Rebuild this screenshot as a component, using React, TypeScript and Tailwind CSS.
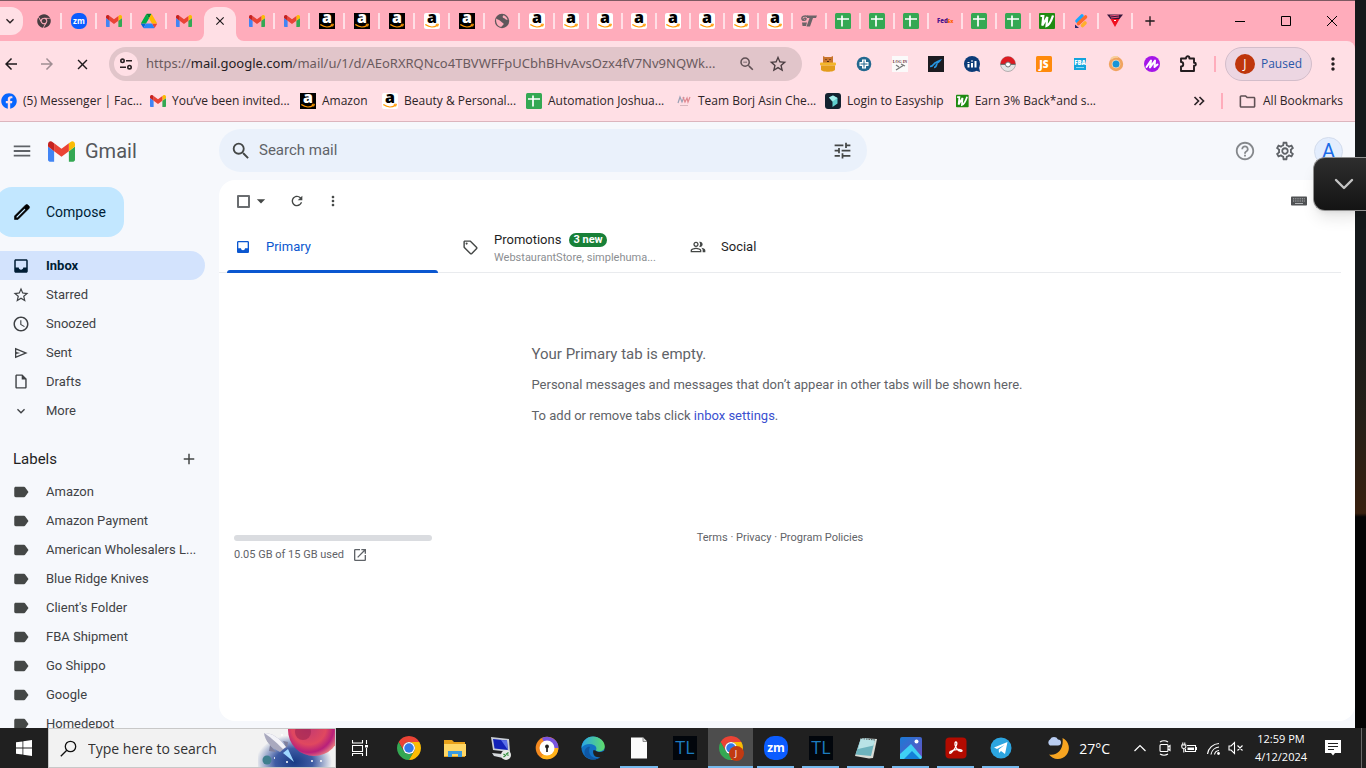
import React from "react";
import {
  MdAdd, MdArrowBack, MdArrowDropDown, MdArrowForward, MdClose, MdExpandMore, MdHelpOutline,
  MdLabel, MdMenu, MdMoreVert, MdOpenInNew, MdOutlineFolder,
  MdOutlineInsertDriveFile, MdOutlinePeopleAlt, MdOutlineSell, MdOutlineSettings,
  MdRefresh, MdSchedule, MdSearch, MdStarBorder, MdTune, MdZoomOut,
} from "react-icons/md";
import { FaChrome, FaFacebook } from "react-icons/fa";

/* ---------- logos ---------- */

const GmailLogo = ({ className = "w-4 h-3" }: { className?: string }) => (
  <svg viewBox="52 42 88 66" className={className} aria-hidden="true">
    <path fill="#4285f4" d="M58 108h14V74L52 59v43c0 3.32 2.69 6 6 6" />
    <path fill="#34a853" d="M120 108h14c3.32 0 6-2.69 6-6V59l-20 15" />
    <path fill="#fbbc04" d="M120 48v26l20-15v-8c0-7.42-8.47-11.65-14.4-7.2" />
    <path fill="#ea4335" d="M72 74V48l24 18 24-18v26L96 92" />
    <path fill="#c5221f" d="M52 51v8l20 15V48l-5.6-4.2c-5.94-4.45-14.4-.22-14.4 7.2" />
  </svg>
);

const DriveLogo = () => (
  <svg viewBox="0 0 87.3 78" className="w-4 h-4" aria-hidden="true">
    <path fill="#0066da" d="m6.6 66.85 3.85 6.65c.8 1.4 1.95 2.5 3.3 3.3l13.75-23.8h-27.5c0 1.55.4 3.1 1.2 4.5z" />
    <path fill="#00ac47" d="m43.65 25-13.75-23.8c-1.35.8-2.5 1.9-3.3 3.3l-25.4 44a9.06 9.06 0 0 0 -1.2 4.5h27.5z" />
    <path fill="#ea4335" d="m73.55 76.8c1.35-.8 2.5-1.9 3.3-3.3l1.6-2.75 7.65-13.25c.8-1.4 1.2-2.95 1.2-4.5h-27.502l5.852 11.5z" />
    <path fill="#00832d" d="m43.65 25 13.75-23.8c-1.35-.8-2.9-1.2-4.5-1.2h-18.5c-1.6 0-3.15.45-4.5 1.2z" />
    <path fill="#2684fc" d="m59.8 53h-32.3l-13.75 23.8c1.35.8 2.9 1.2 4.5 1.2h50.8c1.6 0 3.15-.45 4.5-1.2z" />
    <path fill="#ffba00" d="m73.4 26.5-12.7-22c-.8-1.4-1.95-2.5-3.3-3.3l-13.75 23.8 16.15 28h27.45c0-1.55-.4-3.1-1.2-4.5z" />
  </svg>
);

const AmazonLogo = ({ dark = false }: { dark?: boolean }) => (
  <svg viewBox="0 0 16 16" className="w-4 h-4 shrink-0 overflow-visible" aria-hidden="true">
    <rect width="16" height="16" rx={dark ? 0 : 2} fill={dark ? "#000" : "#fff"} />
    <text x="8" y="10.4" textAnchor="middle" fontFamily="Open Sans, sans-serif" fontWeight="800" fontSize="16" fill={dark ? "#fff" : "#000"}>a</text>
    <path d="M1.8 11.8c3.6 2.7 8.3 2.600 11.4.6" fill="none" stroke="#f90" strokeWidth="1.4" strokeLinecap="round" />
    <path d="M11.8 11.4l2.600-.3-.7 2.4" fill="none" stroke="#f90" strokeWidth="1" />
  </svg>
);

const SheetLogo = () => (
  <svg viewBox="0 0 16 16" className="w-4 h-4" aria-hidden="true">
    <rect width="16" height="16" rx="1.5" fill="#34a853" />
    <path d="M2 6h12M7 2.5v11" stroke="#fff" strokeWidth="1.7" />
  </svg>
);

const ZoomLogo = ({ className = "w-4 h-4" }: { className?: string }) => (
  <svg viewBox="0 0 24 24" className={className} aria-hidden="true">
    <rect width="24" height="24" rx="10" fill="#0b5cff" />
    <text x="12" y="16" textAnchor="middle" fontFamily="Open Sans, sans-serif" fontWeight="700" fontSize="12" fill="#fff">zm</text>
  </svg>
);

const NLogo = () => (
  <svg viewBox="0 0 16 16" className="w-4 h-4" aria-hidden="true">
    <rect width="16" height="16" rx="1" fill="#1f8a12" />
    <path d="M1.500 3h2.800L3.300 12.500 8.300 4l-.8 9C11 12 12.500 7 14 2.500" fill="none" stroke="#fff" strokeWidth="2.200" />
  </svg>
);

const GtLogo = () => (
  <svg viewBox="0 0 16 16" className="w-4 h-4" aria-hidden="true">
    <path d="M7 3.500C3 2 .5 4 1 6s4 1.500 4 0-2.500-.8-2 .2" fill="none" stroke="#6b6468" strokeWidth="1.500" />
    <path d="M6 2.500h10l-1 2.500h-3L9 13.500H5.500L8.500 5H6z M1 9.500h5L5 13H1.500z" fill="#6b6468" />
  </svg>
);

const GlobeLogo = () => (
  <svg viewBox="0 0 16 16" className="w-4 h-4" aria-hidden="true">
    <circle cx="8" cy="8" r="7.200" fill="#5f575b" />
    <path d="M2.200 5.500C3.500 7 5.500 6.500 7 8.500s3 1 2.500 3c-.3 1-1.500 1-2 2.300-3.500 0-6-3.500-5.300-8.300zM9.500 2.300C8 3.500 8.500 5 10 5.200s1 2 3.700 1.500C13 4.500 11.800 3 9.500 2.300z" fill="#ffacbb" />
  </svg>
);

const FedexLogo = () => (
  <svg viewBox="0 0 16 16" className="w-4 h-4 overflow-visible" aria-hidden="true">
    <text x="0" y="10" fontFamily="Open Sans, sans-serif" fontWeight="800" fontSize="6" fill="#4d148c">Fed</text>
    <text x="10.500" y="10" fontFamily="Open Sans, sans-serif" fontWeight="800" fontSize="5" fill="#ff6200">Ex</text>
  </svg>
);

const StripesLogo = () => (
  <svg viewBox="0 0 16 16" className="w-4 h-4" aria-hidden="true">
    <g strokeWidth="3.600" strokeLinecap="round">
      <path d="M4 8l5-5" stroke="#19a7ff" />
      <path d="M5.500 10.500L12.500 4" stroke="#ff6a2b" />
      <path d="M9.500 12.500l2.500-2.500" stroke="#ffb02b" />
    </g>
    <path d="M2 11.500V15h4z" fill="#232a6b" />
  </svg>
);

const TriangleLogo = () => (
  <svg viewBox="0 0 16 16" className="w-4 h-4" aria-hidden="true">
    <path d="M0 1.500h16L12.500 6h-9z" fill="#35163a" />
    <path d="M3 3l9-1M4 5l8-1" stroke="#f0527c" />
    <path d="M3.500 6h9L8 14z" fill="#f01020" />
    <path d="M7 7.500h2" stroke="#fff" />
  </svg>
);

const ChromeLogo = ({ className = "w-6 h-6" }: { className?: string }) => (
  <svg viewBox="0 0 48 48" className={className} aria-hidden="true">
    <path fill="#ea4335" d="M24 12h20.780A24 24 0 0 0 3.220 12l10.390 18A12 12 0 0 1 24 12z" />
    <path fill="#34a853" d="M34.390 30L24 48A24 24 0 0 1 3.220 12L13.610 30A12 12 0 0 0 34.390 30z" />
    <path fill="#fbbc04" d="M24 48A24 24 0 0 0 44.780 12H24A12 12 0 0 1 34.390 30z" />
    <circle cx="24" cy="24" r="12" fill="#fff" />
    <circle cx="24" cy="24" r="9.500" fill="#3379ea" />
  </svg>
);

const EasyshipLogo = () => (
  <svg viewBox="0 0 16 16" className="w-4 h-4" aria-hidden="true">
    <rect width="16" height="16" rx="3" fill="#132230" />
    <path d="M4 4.500L8 2.500l4.500 2.500v5.500L7.500 14V8.500z" fill="#5fd0cf" />
    <path d="M4 4.500l3.500 4L12.500 5 8 2.500z" fill="#a5ecea" />
  </svg>
);

const TeamLogo = () => (
  <svg viewBox="0 0 16 16" className="w-4 h-4" aria-hidden="true">
    <path d="M2 10l2-6 2 5 2-5" fill="none" stroke="#9aa0b4" strokeWidth="1.200" />
    <path d="M7 4l2 5 2-4 1 4 2-5" fill="none" stroke="#e08a92" strokeWidth="1.200" />
    <path d="M4 12.500h8" stroke="#d8b8bf" />
  </svg>
);

/* ---------- mail icons ---------- */

const InboxIcon = ({ className }: { className: string }) => (
  <svg viewBox="0 0 24 24" className={className} fill="currentColor" aria-hidden="true">
    <path d="M19 3H5c-1.100 0-2 .9-2 2v14c0 1.100.9 2 2 2h14c1.100 0 2-.9 2-2V5c0-1.100-.9-2-2-2zm0 11h-4c0 1.660-1.350 3-3 3s-3-1.340-3-3H5V5h14v9z" />
  </svg>
);

const SendIcon = ({ className }: { className: string }) => (
  <svg viewBox="0 0 24 24" className={className} fill="currentColor" aria-hidden="true">
    <path d="M3 20V4l19 8-19 8zm2-3l11.850-5L5 7v3.500l6 1.500-6 1.500V17z" />
  </svg>
);

const PencilIcon = ({ className }: { className: string }) => (
  <svg viewBox="0 0 24 24" className={className} fill="currentColor" aria-hidden="true">
    <path d="M20.410 4.940l-1.350-1.350c-.78-.78-2.050-.78-2.830 0L3 16.820V21h4.180L20.410 7.770c.79-.78.79-2.050 0-2.830zm-14 14.120L5 19v-1.360l9.820-9.820 1.410 1.410-9.820 9.830z" stroke="currentColor" strokeWidth=".7" />
  </svg>
);

const KeyboardIcon = () => (
  <svg viewBox="0 0 16 10" className="h-[10px] w-4" aria-hidden="true">
    <rect y=".5" width="16" height="9" rx=".8" fill="#505254" />
    <path d="M2 2.800h12M2 5h12" stroke="#b4b6b8" strokeWidth="1" strokeDasharray="1 .8" />
    <path d="M4 7.500h8" stroke="#b4b6b8" strokeWidth="1" />
  </svg>
);

/* ---------- browser ---------- */

const leadingTabs: [string, React.ReactNode][] = [
  ["Chrome", <FaChrome className="w-[14px] h-[14px] text-[#463c40]" />],
  ["Zoom", <ZoomLogo />],
  ["Gmail", <GmailLogo />],
  ["Drive", <DriveLogo />],
  ["Gmail inbox", <GmailLogo />],
];
const wideTabs: [string, React.ReactNode][] = [
  ["Gmail", <GmailLogo />],
  ["Gmail", <GmailLogo />],
  ["Amazon", <AmazonLogo dark />],
  ["Amazon", <AmazonLogo dark />],
  ["Amazon", <AmazonLogo dark />],
  ["Amazon", <AmazonLogo />],
  ["Amazon", <AmazonLogo dark />],
  ["Website", <GlobeLogo />],
  ["Amazon", <AmazonLogo />],
];
const narrowTabs: [string, React.ReactNode][] = [
  ["Amazon", <AmazonLogo />],
  ["Amazon", <AmazonLogo />],
  ["Amazon", <AmazonLogo />],
  ["Amazon", <AmazonLogo />],
  ["Amazon", <AmazonLogo />],
  ["Amazon", <AmazonLogo />],
  ["Amazon", <AmazonLogo />],
  ["Store", <GtLogo />],
  ["Sheet", <SheetLogo />],
  ["Sheet", <SheetLogo />],
  ["Sheet", <SheetLogo />],
  ["FedEx", <FedexLogo />],
  ["Sheet", <SheetLogo />],
  ["Sheet", <SheetLogo />],
  ["Cash back", <NLogo />],
  ["Stripes", <StripesLogo />],
  ["Triangle", <TriangleLogo />],
];

const Tab = ({ label, icon, width, last = false }: { label: string; icon: React.ReactNode; width: string; last?: boolean }) => (
  <div className={`flex items-center ${width}`}>
    <button aria-label={label} className="flex flex-1 items-center justify-center h-7">{icon}</button>
    <span className={`w-[2px] h-4 ${last ? "" : "bg-[#ffdfe5]"}`} />
  </div>
);

const TabStrip = () => (
  <div className="flex h-10 shrink-0 bg-[#ffacbb]">
    <button aria-label="Search tabs" className="mt-[6px] mr-1 flex h-7 w-[23px] items-center justify-center self-start rounded-r-xl bg-[#ffdfe5] pr-1">
      <MdExpandMore className="h-4 w-4 text-[#2a2023]" />
    </button>
    <div className="flex items-center">
      {leadingTabs.map(([l, i], k) => <Tab key={k} label={l} icon={i} width="w-[35px]" last={k === 4} />)}
    </div>
    <div className="relative mr-1 ml-[2px] mt-[6px] flex w-8 items-center justify-center rounded-t-xl bg-[#ffdfe5] pb-[6px]">
      <svg viewBox="0 0 8 8" className="absolute -left-2 bottom-0 h-2 w-2"><path d="M8 0v8H0a8 8 0 0 0 8-8z" fill="#ffdfe5" /></svg>
      <button aria-label="Close tab"><MdClose className="h-[14px] w-[14px] text-[#1f1a1c]" /></button>
      <svg viewBox="0 0 8 8" className="absolute -right-2 bottom-0 h-2 w-2"><path d="M0 0v8h8a8 8 0 0 1-8-8z" fill="#ffdfe5" /></svg>
    </div>
    <div className="flex items-center">
      {wideTabs.map(([l, i], k) => <Tab key={k} label={l} icon={i} width="w-[35px]" />)}
      {narrowTabs.map(([l, i], k) => <Tab key={k} label={l} icon={i} width="w-[34px]" />)}
      <button aria-label="New tab" className="flex w-[34px] justify-center"><MdAdd className="h-4 w-4 text-[#1f1a1c]" /></button>
    </div>
    <div className="ml-auto flex items-center">
      <button aria-label="Minimize" className="flex w-[46px] justify-center">
        <svg viewBox="0 0 10 10" className="h-[10px] w-[10px]"><path d="M0 5.500h10" stroke="#000" /></svg>
      </button>
      <button aria-label="Maximize" className="flex w-[46px] justify-center">
        <svg viewBox="0 0 10 10" className="h-[10px] w-[10px]"><path d="M.5.5h9v9h-9z" fill="none" stroke="#000" /></svg>
      </button>
      <button aria-label="Close" className="flex w-[46px] justify-center">
        <svg viewBox="0 0 10 10" className="h-[10px] w-[10px]"><path d="M0 0l10 10M10 0L0 10" stroke="#000" /></svg>
      </button>
    </div>
  </div>
);

const extensions: [string, React.ReactNode][] = [
  ["Honey pot", (
    <svg viewBox="0 0 16 16" className="h-4 w-4"><path d="M3 0l2 1h6l2-1v7H3z" fill="#c9742c" /><path d="M5.500 3.500h1M9.500 3.500h1M7 5.500h2" stroke="#4a260b" /><rect y="6.500" width="16" height="3" rx="1" fill="#f3b52a" /><path d="M1 9.500h14v4c0 3-14 3-14 0z" fill="#e39c1b" /></svg>
  )],
  ["Keepa", (
    <svg viewBox="0 0 16 16" className="h-4 w-4"><circle cx="8" cy="8" r="7.300" fill="#23688f" /><path d="M8 3.500v9M3.500 8h9" stroke="#fff" strokeWidth="4" /><path d="M8 4.500v7M4.500 8h7" stroke="#23688f" strokeWidth="1" /></svg>
  )],
  ["Log in", (
    <svg viewBox="0 0 16 16" className="h-4 w-4 overflow-visible"><rect width="16" height="16" fill="#fbfafa" /><text x="8" y="7" textAnchor="middle" fontFamily="Liberation Serif, serif" fontWeight="700" fontSize="4" fill="#6b2f35">LOG IN</text><path d="M4 9l3 2M4 14l8-5M9 8l4 2" stroke="#777" strokeWidth="1.200" /></svg>
  )],
  ["Jet", (
    <svg viewBox="0 0 16 16" className="h-4 w-4"><rect width="16" height="16" fill="#1c1c21" /><path d="M2 10.500c2 0 3-1 4-2.500s2-2 6-3.500c-1 1.500-1.500 2-3 2.500M6 11.500c2 0 2.500-2 3-4" fill="none" stroke="#2795e0" strokeWidth="1.600" /></svg>
  )],
  ["Analytics", (
    <svg viewBox="0 0 16 16" className="h-4 w-4"><circle cx="8" cy="8" r="8" fill="#0c3c78" /><path d="M10 14l6 2-1-5z" fill="#0c3c78" /><path d="M4.500 8v3.500M8 7v4.500M11.500 5v6.500" stroke="#fff" strokeWidth="2" /><path d="M3.500 6.500h2M7 5h2" stroke="#fff" /></svg>
  )],
  ["Ball", (
    <svg viewBox="0 0 16 16" className="h-4 w-4"><circle cx="8" cy="8" r="7.500" fill="#e4e4e4" stroke="#8c8c8c" strokeWidth=".6" /><path d="M.5 8a7.500 7.500 0 0 1 15 0z" fill="#dd1b22" /><path d="M.5 8.300h15" stroke="#555" /><circle cx="8" cy="8.500" r="2.500" fill="#fff" stroke="#777" /></svg>
  )],
  ["Jungle", (
    <svg viewBox="0 0 16 16" className="h-4 w-4"><rect width="16" height="16" rx="1.500" fill="#ff8a0c" /><text x="8" y="12" textAnchor="middle" fontFamily="Open Sans, sans-serif" fontWeight="800" fontSize="10" fill="#fff">JS</text></svg>
  )],
  ["FBA calculator", (
    <svg viewBox="0 0 16 16" className="h-4 w-4"><rect x="2" y="2" width="12" height="12" fill="#12a4dc" /><text x="8" y="9" textAnchor="middle" fontFamily="Open Sans, sans-serif" fontWeight="800" fontSize="6" fill="#fff">FBA</text><path d="M4 11.500h8" stroke="#8bd4ef" /></svg>
  )],
  ["Target", (
    <svg viewBox="0 0 16 16" className="h-4 w-4"><circle cx="8" cy="8" r="7.200" fill="#f0a460" /><path d="M3 3a7 7 0 0 1 7-2" stroke="#f8cf9c" strokeWidth="2" fill="none" /><circle cx="8" cy="8" r="4.300" fill="#f9e3c4" /><circle cx="8" cy="8" r="3.500" fill="#1595d8" /></svg>
  )],
  ["Messenger", (
    <svg viewBox="0 0 16 16" className="h-4 w-4"><circle cx="8" cy="8" r="8" fill="#a516e8" /><path d="M2.500 11L7 4.500 6 11.500l5-7-.5 6.500 3-2.500" fill="none" stroke="#fff" strokeWidth="2" strokeLinejoin="round" strokeLinecap="round" /></svg>
  )],
  ["Extensions", (
    <svg viewBox="0 0 18 18" className="h-[18px] w-[18px]"><path d="M2 3.500h5V3a1.700 1.700 0 0 1 3.400 0v.5H15v4.300h.4a1.500 1.500 0 0 1 0 3H15v5.200H2v-4.500c3 0 3-4.500 0-4.500z" fill="none" stroke="#241c1f" strokeWidth="1.900" strokeLinejoin="round" /></svg>
  )],
];

const Toolbar = () => (
  <div className="flex h-[46px] shrink-0 items-center rounded-tr-lg bg-[#ffdfe5]">
    <div className="flex w-[109px] shrink-0 items-center gap-[18px] pl-[2px]">
      <button aria-label="Back"><MdArrowBack className="h-[18px] w-[18px] text-[#1f1a1c]" /></button>
      <button aria-label="Forward"><MdArrowForward className="h-[18px] w-[18px] text-[#a08e93]" /></button>
      <button aria-label="Stop"><MdClose className="h-[17px] w-[17px] text-[#1f1a1c]" /></button>
    </div>
    <div className="flex h-[34px] min-w-0 flex-1 items-center rounded-full bg-[#e1c5ca] px-[5px]">
      <button aria-label="Site information" className="flex h-6 w-6 shrink-0 items-center justify-center rounded-full bg-[#ffdfe5]">
        <svg viewBox="0 0 14 14" className="h-[14px] w-[14px]" fill="none" stroke="#2a2023" strokeWidth="1.600"><circle cx="3.500" cy="3.800" r="1.700" /><path d="M7 3.800h6M1 10.200h6" /><circle cx="10.500" cy="10.200" r="1.700" /></svg>
      </button>
      <label className="relative ml-2 min-w-0 flex-1 whitespace-nowrap font-['Noto_Sans',sans-serif] text-[13px] text-[#6a5a5e]">
        https://<span className="text-[#241c1f]">mail.google.com</span>/mail/u/1/d/AEoRXRQNco4TBVWFFpUCbhBHvAvsOzx4fV7Nv9NQWk...
        <input aria-label="Address and search bar" className="absolute inset-0 w-full bg-transparent outline-none" />
      </label>
      <button aria-label="Zoom" className="ml-2"><MdZoomOut className="h-[18px] w-[18px] text-[#5f5054]" /></button>
      <button aria-label="Bookmark this tab" className="ml-3 mr-[9px]"><MdStarBorder className="h-5 w-5 text-[#4a3d41]" /></button>
    </div>
    <div className="ml-2 flex shrink-0 items-center">
      {extensions.map(([l, i]) => <button key={l} aria-label={l} className="flex w-9 justify-center">{i}</button>)}
      <span className="ml-2 h-4 w-[2px] bg-[#ffacbb]" />
      <button className="ml-[9px] flex h-[34px] items-center gap-[6px] rounded-full border border-[#d3bdca] bg-[#ecd6e2] pl-[9px] pr-[9px] text-[12px] text-[#2a56a8]">
        <span className="flex h-5 w-5 items-center justify-center rounded-full bg-[#bf360c] text-[12px] text-white">J</span>
        Paused
      </button>
      <button aria-label="Menu" className="mr-[12px] ml-[11px]"><MdMoreVert className="h-5 w-5 text-[#241c1f]" /></button>
    </div>
  </div>
);

const bookmarks: [React.ReactNode, string, string][] = [
  [<FaFacebook className="h-4 w-4 text-[#0866ff]" />, "(5) Messenger | Fac...", "w-[149px]"],
  [<GmailLogo />, "You’ve been invited...", "w-[150px]"],
  [<AmazonLogo dark />, "Amazon", "w-[82px]"],
  [<AmazonLogo />, "Beauty & Personal...", "w-[144px]"],
  [<SheetLogo />, "Automation Joshua...", "w-[150px]"],
  [<TeamLogo />, "Team Borj Asin Che...", "w-[149px]"],
  [<EasyshipLogo />, "Login to Easyship", "w-[131px]"],
  [<NLogo />, "Earn 3% Back*and s...", "w-[140px]"],
];

const BookmarksBar = () => (
  <div className="flex h-[35px] shrink-0 items-start border-b border-[#dcb5bd] bg-[#ffdfe5] pt-1 pl-px text-[12px] text-[#2d2427]">
    {bookmarks.map(([icon, label, w]) => (
      <a key={label} href="#" className={`flex h-5 shrink-0 items-center gap-[6px] whitespace-nowrap ${w}`}>{icon}{label}</a>
    ))}
    <div className="ml-auto flex h-5 items-center">
      <button aria-label="More bookmarks" className="flex">
        <svg viewBox="0 0 12 12" className="h-3 w-3" fill="none" stroke="#2d2427" strokeWidth="1.700"><path d="M1.500 2l4 4-4 4M6.500 2l4 4-4 4" /></svg>
      </button>
      <span className="ml-4 h-4 w-[2px] bg-[#ffacbb]" />
      <a href="#" className="ml-[15px] mr-[12px] flex items-center gap-[6px] whitespace-nowrap"><MdOutlineFolder className="h-[19px] w-[19px] text-[#5f5054]" />All Bookmarks</a>
    </div>
  </div>
);

/* ---------- mail ---------- */

const GMAIL_FONT = "font-[Roboto,'Liberation_Sans',sans-serif]";

const folders: [string, React.ReactNode][] = [
  ["Inbox", <InboxIcon className="h-[18px] w-[18px]" />],
  ["Starred", <MdStarBorder className="h-[18px] w-[18px]" />],
  ["Snoozed", <MdSchedule className="h-[18px] w-[18px]" />],
  ["Sent", <SendIcon className="h-4 w-[18px]" />],
  ["Drafts", <MdOutlineInsertDriveFile className="h-[17px] w-[18px]" />],
  ["More", <MdExpandMore className="h-4 w-[18px]" />],
];

const labels = [
  "Amazon", "Amazon Payment", "American Wholesalers L...", "Blue Ridge Knives", "Client's Folder",
  "FBA Shipment", "Go Shippo", "Google", "Homedepot",
];

const Sidebar = () => (
  <nav className="flex w-[219px] shrink-0 flex-col overflow-hidden">
    <button className="-ml-1 mt-[7px] flex h-[50px] w-32 shrink-0 items-center gap-[14px] rounded-2xl bg-[#c2e7ff] pl-4 text-[14px] text-[#001d35]">
      <PencilIcon className="h-5 w-5 text-black" />Compose
    </button>
    <ul className="mt-[14px] shrink-0 text-[13px] text-[#3f4245]">
      {folders.map(([name, icon]) => (
        <li key={name}>
          <a href="#" className={`flex h-[29px] w-[205px] items-center gap-4 rounded-r-full pl-3 ${name === "Inbox" ? "bg-[#d3e3fd] font-bold text-[#001d35]" : ""}`}>{icon}{name}</a>
        </li>
      ))}
    </ul>
    <div className="mt-6 flex h-5 w-[205px] shrink-0 items-center justify-between pl-[13px] pr-[7px]">
      <h2 className="text-[15px] text-[#1f1f1f]">Labels</h2>
      <button aria-label="Create new label"><MdAdd className="h-[18px] w-[18px] text-[#444746]" /></button>
    </div>
    <ul className="mt-2 text-[13px] text-[#3f4245]">
      {labels.map((name) => (
        <li key={name}>
          <a href="#" className="flex h-[29px] w-[205px] items-center gap-4 whitespace-nowrap pl-3"><MdLabel className="h-[18px] w-[18px] text-[#444746]" />{name}</a>
        </li>
      ))}
    </ul>
  </nav>
);

const MailHeader = () => (
  <header className="flex h-[58px] shrink-0 items-center">
    <div className="flex w-[219px] shrink-0 items-center pl-[11px]">
      <button aria-label="Main menu"><MdMenu className="h-[22px] w-[22px] text-[#5f6368]" /></button>
      <a href="#" className="ml-[15px] flex items-center gap-[10px] text-[20px] text-[#55585c]"><GmailLogo className="h-[21px] w-[27px]" />Gmail</a>
    </div>
    <div className="mb-[1px] flex h-[43px] w-[648px] items-center rounded-full bg-[#eaf1fb] px-[11px]">
      <button aria-label="Search"><MdSearch className="h-[22px] w-[22px] text-[#444746]" /></button>
      <input aria-label="Search mail" placeholder="Search mail" className="ml-[7px] min-w-0 flex-1 bg-transparent text-[15px] placeholder-[#5f6368] outline-none" />
      <button aria-label="Search options" className="mr-[3px]"><MdTune className="h-[21px] w-[21px] text-[#444746]" /></button>
    </div>
    <div className="ml-auto flex items-center gap-[18px] pr-3">
      <button aria-label="Support"><MdHelpOutline className="h-[22px] w-[22px] text-[#85888c]" /></button>
      <button aria-label="Settings"><MdOutlineSettings className="h-[22px] w-[22px] text-[#5f6368]" /></button>
      <button aria-label="Account" className="flex h-[29px] w-[29px] items-center justify-center rounded-full border border-[#d3dcec] bg-[#e3edfd] text-[20px] text-[#1a6be8]">A</button>
    </div>
  </header>
);

const MailPanel = () => (
  <main className="mb-[7px] flex min-w-0 flex-1 flex-col rounded-l-2xl rounded-br-2xl bg-white text-[#5f6368]">
    <div className="flex h-[42px] shrink-0 items-center pl-[18px] pr-12">
      <input type="checkbox" aria-label="Select all" className="m-0 h-[13px] w-[13px] appearance-none rounded-[1px] border-2 border-[#6a6d70]" />
      <button aria-label="Select options" className="ml-px"><MdArrowDropDown className="h-5 w-5 text-[#444746]" /></button>
      <button aria-label="Refresh" className="ml-[18px]"><MdRefresh className="h-4 w-4 text-[#444746]" /></button>
      <button aria-label="More" className="ml-5"><MdMoreVert className="h-4 w-4 text-[#444746]" /></button>
      <button aria-label="Input tools" className="ml-auto"><KeyboardIcon /></button>
    </div>
    <div role="tablist" className="mr-[14px] flex h-[51px] shrink-0 border-b border-[#e9ebee] text-[13px] text-[#1f1f1f]">
      <button role="tab" aria-selected="true" className="relative flex w-[227px] items-center gap-[15px] pl-4 text-[#0b57d0]">
        <InboxIcon className="h-4 w-4" />Primary
        <span className="absolute bottom-[-1px] left-2 right-2 h-[3px] rounded-t-[3px] bg-[#0b57d0]" />
      </button>
      <button role="tab" aria-selected="false" className="flex w-[228px] items-center gap-[15px] pl-4 text-left">
        <MdOutlineSell className="h-[17px] w-[17px] shrink-0 text-[#444746]" />
        <span className="min-w-0 pt-[3px]">
          <span className="flex items-center gap-2 leading-[18px]">Promotions <span className="rounded-full bg-[#188038] px-[4px] text-[11px] font-bold leading-[14px] text-white">3 new</span></span>
          <span className="block whitespace-nowrap text-[11px] leading-[18px] text-[#8b8e92]">WebstaurantStore, simplehuma...</span>
        </span>
      </button>
      <button role="tab" aria-selected="false" className="flex w-[228px] items-center gap-[15px] pl-4">
        <MdOutlinePeopleAlt className="h-4 w-4 text-[#444746]" />Social
      </button>
    </div>
    <div className="flex flex-col items-center pt-[71px] pr-5 text-[13px]">
      <div className="space-y-[11px] leading-5">
        <p className="text-[15px]">Your Primary tab is empty.</p>
        <p>Personal messages and messages that don’t appear in other tabs will be shown here.</p>
        <p>To add or remove tabs click <a href="#" className="text-[#3a50d0]">inbox settings</a>.</p>
      </div>
    </div>
    <footer className="mt-[109px] mr-[14px] grid grid-cols-3 text-[11px]">
      <div className="pl-[15px]">
        <div className="h-[6px] w-[198px] rounded-full bg-[#dadce0]" />
        <div className="mt-[6px] flex items-center gap-2">0.05 GB of 15 GB used <a href="#" aria-label="Manage storage"><MdOpenInNew className="h-4 w-4" /></a></div>
      </div>
      <p className="-mt-[5px] text-center leading-4"><a href="#">Terms</a> · <a href="#">Privacy</a> · <a href="#">Program Policies</a></p>
    </footer>
  </main>
);

/* ---------- taskbar ---------- */

const TlLogo = () => (
  <svg viewBox="0 0 24 24" className="h-6 w-6"><rect width="24" height="24" fill="#02060c" /><text x="12" y="18" textAnchor="middle" fontFamily="Open Sans, sans-serif" fontSize="18" fill="#1c7cc0">TL</text></svg>
);

const pinned: [string, React.ReactNode][] = [
  ["Chrome", <ChromeLogo />],
  ["File Explorer", (
    <svg viewBox="0 0 24 24" className="h-6 w-6"><path d="M1 4h8l2 2h11v15H1z" fill="#e9a21b" /><path d="M1 8h22v12H1z" fill="#ffd766" /><path d="M5 21v-6h14v6h-4v-3H9v3z" fill="#3b9be0" /></svg>
  )],
  ["Remote Desktop", (
    <svg viewBox="0 0 24 24" className="h-6 w-6"><path d="M2 1l18 2 1 13-17-2z" fill="#c8cdd6" /><path d="M4 3l14 1.500.8 9.500L5.500 12.500z" fill="#1222b8" /><path d="M12 4l6 .5.5 9z" fill="#5a70e8" /><path d="M3 17l10 1 1 4-9-2z" fill="#d7dade" /><circle cx="17" cy="19" r="5" fill="#e8ebe8" /><path d="M14.500 18l2 1.500-2 1.500M19.500 16.500l-2 1.500 2 1.500" stroke="#2b8b36" strokeWidth="1.200" fill="none" /></svg>
  )],
  ["Secure browser", (
    <svg viewBox="0 0 24 24" className="h-6 w-6"><circle cx="12" cy="12" r="11.300" fill="#f58a1f" /><path d="M7 2A11.300 11.300 0 0 1 23 15L12 12z" fill="#7a55e0" /><path d="M23.300 12A11.300 11.300 0 0 1 6 21.500L12 12z" fill="#ffb21a" /><circle cx="12" cy="12" r="7.500" fill="#fff" /><circle cx="12" cy="10.500" r="1.900" fill="#222" /><path d="M12 10v6" stroke="#222" strokeWidth="1.700" /></svg>
  )],
  ["Edge", (
    <svg viewBox="0 0 24 24" className="h-6 w-6">
      <defs><linearGradient id="edgeTop" x1="0" x2="1"><stop offset="0" stopColor="#2aa6e8" /><stop offset="1" stopColor="#5fdc6a" /></linearGradient></defs>
      <circle cx="12" cy="12" r="11.500" fill="#1272c4" />
      <path d="M.5 12C1 5 6 .5 12 .5S24 5 23.800 11c-.3 4-5 5.500-9 3.500 1-1 1-4-1.500-5.300C9 7 3 8 .5 12z" fill="url(#edgeTop)" />
      <path d="M9 11c-3 6 2 13 10 10.500A11.500 11.500 0 0 1 4 20C2 14 6 10 9 11z" fill="#0f57a4" />
      <path d="M14.500 14.500c3 2.500 7 1.500 9 0L24 20l-4 1c-6 1.500-9-3-7.500-7z" fill="#202020" />
    </svg>
  )],
  ["Document", (
    <svg viewBox="0 0 24 24" className="h-6 w-6"><path d="M4 1.500h12L20 5.500V22.500H4z" fill="#fbfbfb" /><path d="M16 1.500v4h4" fill="#ddd" stroke="#777" strokeWidth=".8" /></svg>
  )],
  ["TL", <TlLogo />],
];

const running: [string, React.ReactNode][] = [
  ["Chrome profile", (
    <span className="relative block h-6 w-6"><ChromeLogo /><span className="absolute -right-px -bottom-px flex h-[15px] w-[15px] items-center justify-center rounded-full bg-[#c13a12] text-[9px] leading-3 text-white">J</span></span>
  )],
  ["Zoom", <ZoomLogo className="h-6 w-6" />],
  ["TL", <TlLogo />],
  ["Notepad", (
    <svg viewBox="0 0 24 24" className="h-6 w-6"><path d="M7 2l16 1-4 19-4 .5L1 20z" fill="#d9dcd6" /><path d="M7 2l14 1.500L17 20 1.500 18.500z" fill="#6db3bd" /><path d="M7 2l14 1.500-1.500 6L4 13z" fill="#b9e3e6" /><path d="M7 2.500l14 1.500" stroke="#555" strokeDasharray="1.500 1" /></svg>
  )],
  ["Photos", (
    <svg viewBox="0 0 24 24" className="h-6 w-6"><defs><linearGradient id="photo" x2="1" y2="1"><stop stopColor="#1a7ad6" /><stop offset="1" stopColor="#6a4fc0" /></linearGradient></defs><rect x="1" y="1" width="22" height="22" rx="2" fill="url(#photo)" /><path d="M1 18L12 8l11 13-1 2H1z" fill="#3fd0f5" /><path d="M5 23l8-8 8 8z" fill="#1480d8" /><circle cx="17.500" cy="5.500" r="2" fill="#fff" /></svg>
  )],
  ["Acrobat", (
    <svg viewBox="0 0 24 24" className="h-6 w-6"><rect x="1.500" y="1.500" width="21" height="21" rx="4" fill="#b30b00" /><path d="M12 6c2 0 .5 6-5 11-1.500 1-2-.8 0-1.800 3-1.700 8-2.200 10.500-1.200 1.500 1-.5 2-2.500.8C12.500 13.500 10.500 9 11 7c.2-.7.5-1 1-1z" fill="none" stroke="#fff" strokeWidth="1.300" /></svg>
  )],
  ["Telegram", (
    <svg viewBox="0 0 24 24" className="h-6 w-6"><circle cx="12" cy="12" r="10.500" fill="#2ca5e0" /><path d="M5 11.500L18.500 6 16 18l-4-3-2 2-.3-3.500L15.500 9 8 13z" fill="#fff" /></svg>
  )],
];

const SpaceArt = () => (
  <svg viewBox="0 0 77 38" className="h-full w-[77px]" aria-hidden="true">
    <defs>
      <radialGradient id="sky"><stop offset="0" stopColor="#173a84" /><stop offset=".5" stopColor="#3f5ca4" /><stop offset="1" stopColor="#f2f2f2" /></radialGradient>
      <radialGradient id="planet" cx=".4" cy=".45" r=".6"><stop stopColor="#c23a72" /><stop offset=".55" stopColor="#e0485f" /><stop offset=".8" stopColor="#b8207a" /><stop offset="1" stopColor="#e87a80" /></radialGradient>
    </defs>
    <ellipse cx="36" cy="33" rx="38" ry="27" fill="url(#sky)" />
    <circle cx="56" cy="1" r="26" fill="url(#planet)" />
    <circle cx="45" cy="3" r="8" fill="#9c2450" opacity=".6" />
    <path d="M6 4c9 0 15 5 22 14l-6 5C13 19 7 12 6 4z" fill="#a9a9be" />
    <path d="M6 4c9 0 15 5 22 14l-3 2C17 12 11 7 6 4z" fill="#f3f3f8" />
    <path d="M12 16l-1 6 7 1zM25 12l5 1-1 6z" fill="#80809c" />
    <path d="M25 24l5-4 6 13z" fill="#9fd8ff" />
    <circle cx="9" cy="31" r="4.500" fill="#3f7f8e" />
    <path d="M16 29h1M28 33h2M53 32h2M62 32h2M23 6h2" stroke="#fff" strokeWidth="1.600" />
  </svg>
);

const Taskbar = () => (
  <footer className="flex h-10 shrink-0 bg-[#202020] text-white">
    <button aria-label="Start" className="flex w-12 items-center justify-center">
      <svg viewBox="0 0 16 16" className="h-4 w-4" fill="#fff"><path d="M0 2.300l6.500-.9v6.200H0zM7.300 1.300L16 0v7.600H7.300zM0 8.400h6.500v6.200L0 13.700zM7.300 8.400H16V16l-8.700-1.300z" /></svg>
    </button>
    <label className="flex w-72 items-center border border-[#c8c8c8] bg-[#f2f2f2] pl-[11px]">
      <svg viewBox="0 0 17 17" className="h-[17px] w-[17px] shrink-0" fill="none" stroke="#111" strokeWidth="1.300"><circle cx="10.500" cy="6.500" r="5.200" /><path d="M6.800 10.200L.8 16.200" /></svg>
      <input placeholder="Type here to search" aria-label="Type here to search" className="ml-[11px] min-w-0 flex-1 bg-transparent text-[14px] placeholder-[#333] outline-none" />
      <SpaceArt />
    </label>
    <button aria-label="Task view" className="mr-[2px] flex w-12 items-center justify-center">
      <svg viewBox="0 0 16 16" className="h-4 w-4" fill="none" stroke="#fff" strokeWidth="1.100"><path d="M.5 0v3h10V0M.5 5.500h10v6H.5zM.5 16v-2.500h10V16M14.500 0v4M14.500 8v8" /><path d="M13 5h3v2.500h-3z" fill="#fff" stroke="none" /></svg>
    </button>
    {pinned.map(([l, i]) => (
      <button key={l} aria-label={l} className="relative flex w-[46px] items-center justify-center">{i}{l === "Document" && <span className="absolute inset-x-1 bottom-0 h-[2px] bg-[#76b9ed]" />}</button>
    ))}
    {running.map(([l, i], k) => (
      <button key={l} aria-label={l} className={`relative flex w-[45px] items-center justify-center ${k === 0 ? "bg-[#4d4d4d]" : ""}`}>
        {i}<span className={`absolute bottom-0 h-[2px] bg-[#76b9ed] ${k === 0 ? "inset-x-0" : "inset-x-1"}`} />
      </button>
    ))}
    <div className="ml-auto flex items-center">
      <button className="flex items-center gap-[9px] text-[14px]">
        <svg viewBox="0 0 24 24" className="h-6 w-6"><path d="M16.500 2a11 11 0 1 1-13.500 16.500c9 1.500 15-6 13.500-16.500z" fill="#f6a421" /><path d="M4 9.500a3.500 3.500 0 0 1 0-6 4.500 4.500 0 0 1 8 0 3 3 0 0 1 0 6z" fill="#b9cdf2" /></svg>
        27°C
      </button>
      <button aria-label="Show hidden icons" className="ml-[23px]">
        <svg viewBox="0 0 14 14" className="h-[14px] w-[14px]" fill="none" stroke="#fff" strokeWidth="1.200"><path d="M1.500 10L7 4.500l5.500 5.500" /></svg>
      </button>
      <button aria-label="Meet now" className="ml-[10px]">
        <svg viewBox="0 0 16 16" className="h-4 w-4" fill="none" stroke="#fff" strokeWidth="1.100"><rect x="3" y="4.500" width="8" height="7" rx="1" /><path d="M11 7l2-1.500v5L11 9M3 2c2.500-1.500 5.500-1.500 8 0M3 14c2.500 1.500 5.500 1.500 8 0" /></svg>
      </button>
      <button aria-label="Battery" className="ml-2">
        <svg viewBox="0 0 16 16" className="h-4 w-4" fill="none" stroke="#fff" strokeWidth="1.100"><path d="M6 5.500h8.500v6H4.500V9M15.500 7v3M.8 5h4v2c0 2-4 2-4 0zM1.800 5V2.500M3.800 5V2.500M2.800 9v3.500" /><path d="M6.500 7.500H13v2.500H6.500z" fill="#fff" stroke="none" /></svg>
      </button>
      <button aria-label="Network" className="ml-[9px]">
        <svg viewBox="0 0 16 16" className="h-4 w-4" fill="none" stroke="#fff" strokeWidth="1.200"><path d="M1.500 14A12 12 0 0 1 13 3.500M5 14.500a9 9 0 0 1 8-7.500M8.500 14.500a5 5 0 0 1 4.500-4" /><circle cx="12.500" cy="13.500" r="1.400" fill="#fff" stroke="none" /></svg>
      </button>
      <button aria-label="Volume muted" className="ml-[6px]">
        <svg viewBox="0 0 16 16" className="h-4 w-4" fill="none" stroke="#fff" strokeWidth="1.100"><path d="M1 6h2l3.500-3.500v11L3 10H1zM9.500 5.500l5 5M14.500 5.500l-5 5" /></svg>
      </button>
      <button className="ml-2 w-[58px] whitespace-nowrap text-center text-[11px] leading-[18px]">12:59 PM<br />4/12/2024</button>
      <button aria-label="Notifications" className="ml-[15px]">
        <svg viewBox="0 0 16 16" className="h-4 w-4"><path d="M0 0h16v13h-6l-2 2.500L6 13H0z" fill="#fff" /><path d="M3 3.500h10M3 6.500h10M3 9.500h6" stroke="#202020" /></svg>
      </button>
      <span className="ml-5 mr-1 h-10 w-px bg-[#6a6a6a]" />
    </div>
  </footer>
);

export default function App() {
  return (
    <div className="relative flex h-screen flex-col overflow-hidden font-['Open_Sans','Noto_Sans',sans-serif]">
      <div className="flex min-h-0 flex-1">
        <div className="flex min-w-0 flex-1 flex-col border-t border-[#7d5962] bg-[#ffacbb]">
          <TabStrip />
          <Toolbar />
          <BookmarksBar />
          <div className={`flex min-h-0 flex-1 flex-col bg-[#f6f8fc] ${GMAIL_FONT}`}>
            <MailHeader />
            <div className="flex min-h-0 flex-1">
              <Sidebar />
              <MailPanel />
            </div>
          </div>
        </div>
        <div className="w-[11px] shrink-0 bg-[linear-gradient(#15191b_0%,#15191b_40%,#262018_58%,#38200f_70.500%,#040404_71%)]" />
      </div>
      <Taskbar />
      <button aria-label="Collapse panel" className="absolute top-[157px] right-0 flex h-[54px] w-[53px] items-center rounded-l-xl border border-r-0 border-[#909090] bg-linear-to-b from-[#2e2e2e] to-[#141414] pl-5 shadow-lg">
        <svg viewBox="0 0 20 12" className="h-3 w-5" fill="none" stroke="#c4c4c4" strokeWidth="2.400" strokeLinecap="round" strokeLinejoin="round"><path d="M2 2l8 8 8-8" /></svg>
      </button>
    </div>
  );
}
